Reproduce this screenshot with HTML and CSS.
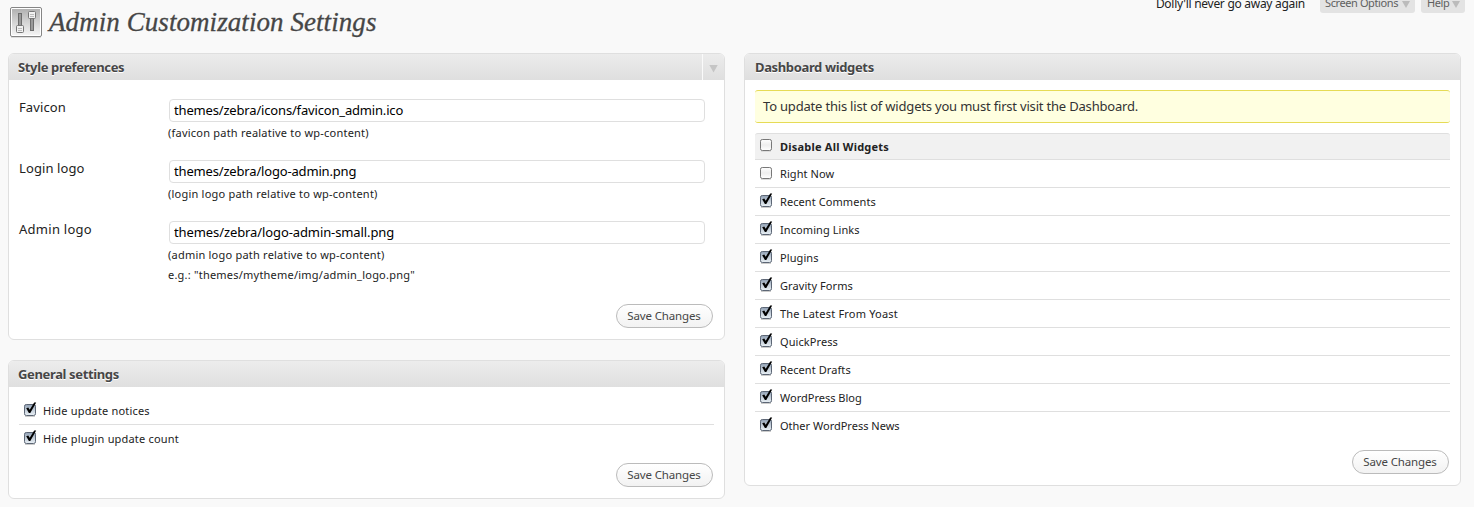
FILE: index.html
```html
<!DOCTYPE html>
<html lang="en">
<head>
<meta charset="utf-8">
<title>Admin Customization Settings</title>
<link rel="stylesheet" href="styles.css">
</head>
<body>
<svg class="defs" width="0" height="0" aria-hidden="true">
  <defs>
    <linearGradient id="on" x1="0" y1="0" x2="0" y2="1"><stop offset="0" stop-color="#8f9fb3"/><stop offset=".5" stop-color="#c3cdd8"/><stop offset="1" stop-color="#e9f0f5"/></linearGradient>
    <linearGradient id="off" x1="0" y1="0" x2="0" y2="1"><stop offset="0" stop-color="#fff"/><stop offset=".5" stop-color="#eee"/><stop offset="1" stop-color="#fff"/></linearGradient>
    <linearGradient id="tile" x1="0" y1="0" x2="0" y2="1"><stop offset="0" stop-color="#b2b2b2"/><stop offset="1" stop-color="#f4f4f4"/></linearGradient>
    <symbol id="checked" viewBox="0 0 14 16">
      <path d="M2 15.5h10" stroke="#ccc"/>
      <rect x="1.5" y="3.5" width="11" height="11" rx="1.8" fill="url(#on)" stroke="#5c6675"/>
      <path d="M3.2 7.2 5.3 6.5 6.7 8.8 11.2 1.6 13.2 1.4 7.3 12 5.9 12Z" fill="#000"/>
    </symbol>
    <symbol id="unchecked" viewBox="0 0 14 16">
      <path d="M2 15.5h10" stroke="#ddd"/>
      <rect x="1.5" y="3.5" width="11" height="11" rx="1.8" fill="url(#off)" stroke="#777"/>
    </symbol>
  </defs>
</svg>

<header class="top">
  <svg class="tools" width="34" height="34" viewBox="0 0 34 34" aria-hidden="true">
    <path d="M2 31.5h30" stroke="#ddd"/>
    <rect x="1.5" y="1.5" width="31" height="29" rx="1.5" fill="#fff" stroke="#858585"/>
    <rect x="3" y="3" width="28" height="26" fill="url(#tile)"/>
    <rect x="9.5" y="7.5" width="3" height="14" fill="#999" stroke="#6c6c6c"/>
    <rect x="21.5" y="10.5" width="3" height="14" fill="#999" stroke="#6c6c6c"/>
    <rect x="7.5" y="19.5" width="7" height="7" rx="1" fill="#f1f1f1" stroke="#777"/>
    <rect x="19.5" y="5.5" width="7" height="7" rx="1" fill="#f1f1f1" stroke="#777"/>
    <path d="M9 22.5h4M9 24.5h4M21 8.5h4M21 10.5h4" stroke="#bbb"/>
  </svg>
  <h1 class="title">Admin Customization Settings</h1>
  <p class="lyric">Dolly'll never go away again</p>
  <div class="tabs"><a class="tab tab-options">Screen Options<i class="arrow"></i></a><a class="tab tab-help">Help<i class="arrow"></i></a></div>
</header>

<main class="columns">
  <div class="column">
    <section class="panel panel-style">
      <h2 class="panel-head">Style preferences<span class="toggle"><i class="arrow"></i></span></h2>
      <div class="fields">
        <div class="field"><label for="favicon">Favicon</label><div><input class="tight" id="favicon" value="themes/zebra/icons/favicon_admin.ico"><p class="hint">(favicon path realative to wp-content)</p></div></div>
        <div class="field"><label for="login">Login logo</label><div><input class="tight" id="login" value="themes/zebra/logo-admin.png"><p class="hint">(login logo path relative to wp-content)</p></div></div>
        <div class="field"><label class="wide" for="admin">Admin logo</label><div><input id="admin" value="themes/zebra/logo-admin-small.png"><p class="hint">(admin logo path relative to wp-content)<br>e.g.: "themes/mytheme/img/admin_logo.png"</p></div></div>
      </div>
      <button class="save">Save Changes</button>
    </section>
    <section class="panel panel-general">
      <h2 class="panel-head">General settings</h2>
      <ul class="list list-general">
        <li><svg class="box"><use href="#checked"/></svg>Hide update notices</li>
        <li><svg class="box"><use href="#checked"/></svg>Hide plugin update count</li>
      </ul>
      <button class="save">Save Changes</button>
    </section>
  </div>
  <section class="panel panel-widgets">
    <h2 class="panel-head">Dashboard widgets</h2>
    <p class="notice">To update this list of widgets you must first visit the Dashboard.</p>
    <ul class="list">
      <li class="all"><svg class="box"><use href="#unchecked"/></svg>Disable All Widgets</li>
      <li><svg class="box"><use href="#unchecked"/></svg>Right Now</li>
      <li><svg class="box"><use href="#checked"/></svg>Recent Comments</li>
      <li><svg class="box"><use href="#checked"/></svg>Incoming Links</li>
      <li><svg class="box"><use href="#checked"/></svg>Plugins</li>
      <li><svg class="box"><use href="#checked"/></svg>Gravity Forms</li>
      <li class="wide"><svg class="box"><use href="#checked"/></svg>The Latest From Yoast</li>
      <li><svg class="box"><use href="#checked"/></svg>QuickPress</li>
      <li><svg class="box"><use href="#checked"/></svg>Recent Drafts</li>
      <li class="even"><svg class="box"><use href="#checked"/></svg>WordPress Blog</li>
      <li class="even"><svg class="box"><use href="#checked"/></svg>Other WordPress News</li>
    </ul>
    <button class="save">Save Changes</button>
  </section>
</main>
</body>
</html>
```
FILE: styles.css
```css
* { box-sizing: border-box; }
body {
  margin: 0;
  height: 507px;
  overflow: hidden;
  background: #f9f9f9;
  color: #222;
  font: 11px/20px "Noto Sans", "Open Sans", sans-serif;
}
h1, h2, p, ul { margin: 0; padding: 0; }
.defs { display: block; }

.top { display: flex; align-items: flex-start; height: 53px; padding: 0 9px; }
.tools { margin-top: 6px; }
.title {
  margin: 5px 0 0 6px;
  color: #464646;
  font: italic 27px/35px "Liberation Serif", serif;
  letter-spacing: .07px;
  white-space: nowrap;
  -webkit-text-stroke: .3px #464646;
}
.lyric { margin: -6px 15px 0 auto; font-size: 12px; letter-spacing: -.28px; white-space: nowrap; }
.tabs { display: flex; gap: 6px; }
.tab {
  display: flex;
  justify-content: space-between;
  height: 13px;
  padding: 0 5px;
  border-radius: 0 0 3px 3px;
  background: #e3e3e3;
  color: #606060;
  font-size: 11px;
  letter-spacing: -.4px;
  line-height: 5px;
  white-space: nowrap;
}
.tab-options { width: 95px; }
.tab-help { width: 44px; padding-left: 6px; }
.arrow {
  width: 8px;
  height: 7px;
  background: #bbb;
  clip-path: polygon(0 0, 100% 0, 50% 100%);
}
.tab .arrow { margin-top: 1px; }

.columns { display: flex; align-items: flex-start; gap: 19px; padding-left: 8px; }
.column { display: flex; flex-direction: column; gap: 20px; }
.panel {
  display: flex;
  flex-direction: column;
  width: 717px;
  border: 1px solid #dfdfdf;
  border-radius: 6px;
  background: #fff;
}
.panel-style { height: 287px; }
.panel-general { height: 139px; }
.panel-widgets { height: 433px; }
.panel-head {
  display: flex;
  justify-content: space-between;
  flex: none;
  height: 26px;
  padding-left: 9px;
  border-radius: 5px 5px 0 0;
  background: linear-gradient(#ececec, #dfdfdf);
  color: #464646;
  font-size: 13px;
  letter-spacing: -.36px;
  line-height: 27px;
  text-shadow: 0 1px 0 #fff;
}
.panel-widgets .panel-head { padding-left: 10px; }
.toggle {
  display: flex;
  align-items: center;
  justify-content: center;
  width: 22px;
  border-left: 1px solid #fafafa;
}
.toggle .arrow { width: 9px; height: 8px; margin-top: 3px; background: #c5c5c5; }

.fields { padding: 19px 0 0 10px; }
.field { display: grid; grid-template-columns: 150px 536px; height: 61px; font-size: 13px; }
.field label { margin-top: -2px; letter-spacing: .1px; }
.field .wide { letter-spacing: .27px; }
.field input {
  display: block;
  width: 536px;
  height: 23px;
  padding: 0 4px 1px;
  border: 1px solid #dfdfdf;
  border-radius: 4px;
  background: #fff;
  color: #000;
  font: 13px/20px "Noto Sans", sans-serif;
  letter-spacing: -.1px;
}
.field .tight { letter-spacing: -.17px; }
.hint { margin: 1px 0 0 -1px; font-size: 11px; letter-spacing: .22px; white-space: nowrap; }

.save {
  align-self: flex-end;
  width: 97px;
  height: 24px;
  margin: auto 11px 11px 0;
  padding: 0 1px 0 0;
  border: 1px solid #bbb;
  border-radius: 12px;
  background: linear-gradient(#fff, #f2f2f2);
  color: #464646;
  font: 11.5px/20px "Noto Sans", sans-serif;
  letter-spacing: -.15px;
}

.notice {
  height: 33px;
  margin: 10px 10px 0;
  padding-left: 8px;
  border: solid #e6db55;
  border-width: 1px 0;
  border-radius: 3px;
  background: #ffffe0;
  color: #333;
  font-size: 13px;
  letter-spacing: -.19px;
  line-height: 31px;
}
.list { margin: 10px 10px 0; list-style: none; letter-spacing: .08px; }
.list li {
  display: flex;
  align-items: center;
  height: 28px;
  padding: 1px 0 0 4px;
  border-bottom: 1px solid #dfdfdf;
}
.list li:last-child { height: 27px; border-bottom: 0; }
.list .all {
  height: 27px;
  border-top: 1px solid #dfdfdf;
  border-radius: 3px 3px 0 0;
  background: #f1f1f1;
  font-weight: bold;
  letter-spacing: .22px;
}
.list .wide { letter-spacing: .2px; }
.list .even { letter-spacing: 0; }
.list-general { letter-spacing: .18px; }
.box { flex: none; width: 14px; height: 16px; margin: -4px 7px 0 0; }
.all .box { margin-top: -6px; }
.list-general .box { margin-right: 6px; }
```
